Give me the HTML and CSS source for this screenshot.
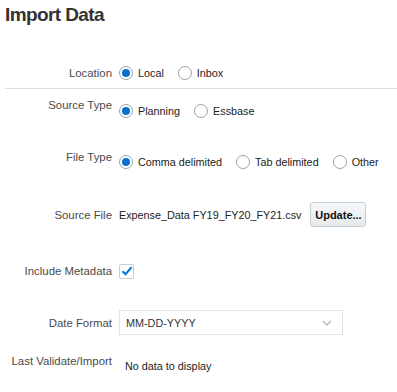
FILE: index.html
```html
<!DOCTYPE html>
<html lang="en">
<head>
    <meta charset="UTF-8">
    <meta name="viewport" content="width=device-width, initial-scale=1.0">
    <title>Import Data</title>
    <link rel="stylesheet" href="styles.css">
</head>
<body>
    <h1 class="title">Import Data</h1>

    <div class="row row-location">
        <div class="label">Location</div>
        <div class="value">
            <span class="option"><span class="radio checked"></span>Local</span>
            <span class="option"><span class="radio"></span>Inbox</span>
        </div>
    </div>

    <hr class="divider">

    <div class="row row-source-type top">
        <div class="label">Source Type</div>
        <div class="value shift6">
            <span class="option"><span class="radio checked"></span>Planning</span>
            <span class="option"><span class="radio"></span>Essbase</span>
        </div>
    </div>

    <div class="row row-file-type top">
        <div class="label">File Type</div>
        <div class="value shift5">
            <span class="option"><span class="radio checked"></span>Comma delimited</span>
            <span class="option"><span class="radio"></span>Tab delimited</span>
            <span class="option"><span class="radio"></span>Other</span>
        </div>
    </div>

    <div class="row row-source-file">
        <div class="label">Source File</div>
        <div class="value">
            <span class="file-name">Expense_Data FY19_FY20_FY21.csv</span>
            <button class="btn" type="button">Update...</button>
        </div>
    </div>

    <div class="row row-metadata">
        <div class="label">Include Metadata</div>
        <div class="value">
            <span class="checkbox">
                <svg width="12" height="12" viewBox="0 0 12 12">
                    <path d="M1.5 6.2 L4.6 9.2 L10.6 2.2" fill="none" stroke="#0572ce" stroke-width="2"/>
                </svg>
            </span>
        </div>
    </div>

    <div class="row row-date">
        <div class="label">Date Format</div>
        <div class="value">
            <div class="select">
                <span>MM-DD-YYYY</span>
                <svg width="10" height="6" viewBox="0 0 10 6">
                    <path d="M1 1 L5 5 L9 1" fill="none" stroke="#a8b0b6" stroke-width="1.2"/>
                </svg>
            </div>
        </div>
    </div>

    <div class="row row-last top">
        <div class="label">Last Validate/Import</div>
        <div class="value shift5 indent">No data to display</div>
    </div>
</body>
</html>
```

FILE: styles.css
```css
body {
    margin: 0;
    font-family: "Liberation Sans", Arial, sans-serif;
    font-size: 10.8px;
    color: #333;
    background: #fff;
}
.title {
    margin: 0;
    padding: 3px 0 0 5px;
    font-size: 19px;
    line-height: 24px;
    letter-spacing: -0.6px;
    font-weight: bold;
    color: #333;
}
.row {
    display: flex;
    align-items: center;
    white-space: nowrap;
}
.row.top {
    align-items: flex-start;
}
.label {
    width: 112px;
    flex: none;
    text-align: right;
    font-size: 11.4px;
    line-height: 16px;
    color: #4a4a4a;
    margin-right: 7px;
}
.value {
    display: flex;
    align-items: center;
    line-height: 16px;
    color: #222;
}
.shift6 {
    margin-top: 6px;
}
.shift5 {
    margin-top: 5px;
}
.indent {
    padding-left: 6px;
}
.option {
    display: flex;
    align-items: center;
    flex: none;
    margin-right: 14px;
}
.radio {
    width: 12px;
    height: 12px;
    flex: none;
    border: 1px solid #9aa3aa;
    border-radius: 50%;
    margin-right: 5px;
    display: flex;
    align-items: center;
    justify-content: center;
    background: #fff;
}
.radio.checked::after {
    content: "";
    width: 8px;
    height: 8px;
    border-radius: 50%;
    background: #0572ce;
}
.divider {
    margin: 7px 0 0 5px;
    border: none;
    border-top: 1px solid #d6dfe6;
}
.row-location {
    margin-top: 38px;
    height: 16px;
}
.row-source-type {
    margin-top: 8px;
}
.row-file-type {
    margin-top: 30px;
}
.row-source-file {
    margin-top: 32px;
}
.file-name {
    margin-right: 9px;
}
.btn {
    height: 25px;
    width: 56px;
    padding: 0;
    border: 1px solid #c4ced7;
    border-radius: 3px;
    background: linear-gradient(#f6f7f8, #e6eaed);
    font-family: inherit;
    font-size: 11px;
    font-weight: bold;
    color: #111;
}
.row-metadata {
    margin-top: 36px;
    height: 16px;
}
.checkbox {
    width: 13px;
    height: 13px;
    border: 1px solid #c4ced7;
    border-radius: 2px;
    display: flex;
    align-items: center;
    justify-content: center;
}
.row-date {
    margin-top: 31px;
}
.select {
    width: 206px;
    height: 23px;
    border: 1px solid #dfe4e7;
    display: flex;
    align-items: center;
    justify-content: space-between;
    padding: 0 10px 0 6px;
    color: #333;
}
.row-last {
    margin-top: 18px;
}
```
